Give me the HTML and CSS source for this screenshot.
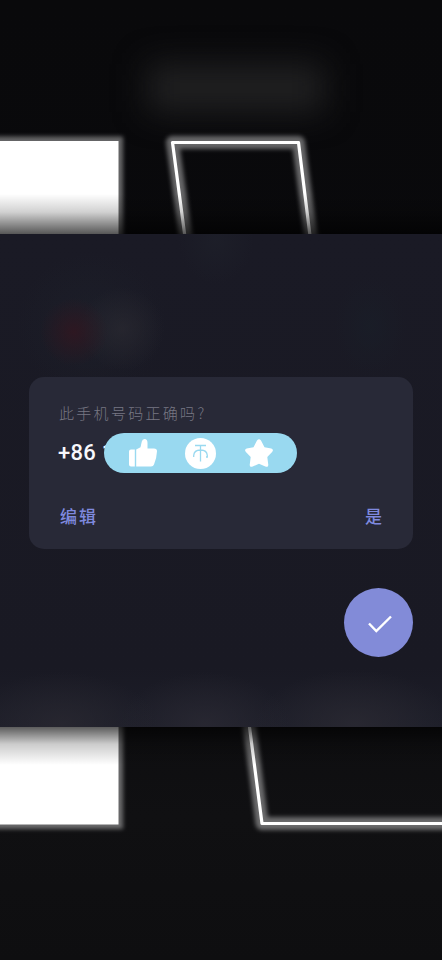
FILE: index.html
```html
<!DOCTYPE html>
<html lang="zh-CN">
<head>
<meta charset="utf-8">
<meta name="viewport" content="width=device-width, initial-scale=1">
<title>确认手机号码</title>
<link rel="stylesheet" href="styles.css">
</head>
<body>
<main class="screen">
  <svg class="wallpaper" viewBox="0 0 442 960" aria-hidden="true">
    <defs>
      <filter id="glow" filterUnits="userSpaceOnUse" x="-40" y="110" width="522" height="750"><feGaussianBlur stdDeviation="2.2"/></filter>
      <filter id="haze" color-interpolation-filters="sRGB" filterUnits="userSpaceOnUse" x="60" y="0" width="360" height="190"><feGaussianBlur stdDeviation="16"/></filter>
      <linearGradient id="top" x2="0" y2="1"><stop offset="0" stop-opacity="0"/><stop offset=".45" stop-opacity=".18"/><stop offset="1" stop-opacity=".66"/></linearGradient>
      <linearGradient id="bottom" x2="0" y2="1"><stop offset="0" stop-opacity=".64"/><stop offset=".45" stop-opacity=".2"/><stop offset="1" stop-opacity="0"/></linearGradient>
    </defs>
    <rect class="haze" x="148" y="64" width="176" height="48" filter="url(#haze)"/>
    <g class="halo" filter="url(#glow)">
      <path class="block" d="M-20 136.500H123V829H-20z"/>
      <path class="line" d="M189 260L172.500 142.500H298.500L314 260M246 700L262 823.500H470"/>
    </g>
    <path class="block" d="M-20 141H118.500V824.500H-20z"/>
    <path class="line" d="M188 260L172.500 142.500H298.500L313 260M246 700L262 823.500H470"/>
    <path fill="url(#top)" d="M0 194H442V234H0z"/>
    <path fill="url(#bottom)" d="M0 727H442V765H0z"/>
  </svg>
  <section class="sheet">
    <div class="card">
      <p class="question">此手机号码正确吗?</p>
      <div class="number">
        <span class="phone">+86 1</span>
        <div class="pill">
          <svg class="icon" viewBox="0 0 28 28" aria-hidden="true"><path d="M2 10.500h3.800v17H2q-2 0-2-2v-13q0-2 2-2zM7.200 10.500l4.300-2.300 1.300-5.700Q13.400 0 15.500 0q3 0 3 4v5.500H25q3 0 3 2.800-.3 7-3 13.200-.6 2-3 2H7.200z"/></svg>
          <svg class="coin" viewBox="0 0 31 31" aria-hidden="true"><circle cx="15.500" cy="15.500" r="15.500"/><path d="M10 7.500H21M15.500 7.500V23.500M8.700 19V17.500q.3-5.500 6.800-5.500t6.800 5.500V19h-1.300"/></svg>
          <svg class="icon" viewBox="0 0 28 28" aria-hidden="true"><path d="M12 1.500Q14-1 16 1.500l3.500 6.800 6.800 1.200q2.800 1 .8 3.400L22.300 18l1 8q-.1 2.700-3 1.500L14 24.700l-6.300 2.800q-2.900 1.200-3-1.500l1-8L.9 12.900q-2-2.400.8-3.400l6.800-1.200z"/></svg>
        </div>
      </div>
      <div class="actions"><button class="edit">编辑</button><button class="yes">是</button></div>
    </div>
    <button class="confirm" aria-label="确认">
      <svg class="check" viewBox="0 0 24 18" aria-hidden="true"><path d="M1 8.500L8.300 16L23 1.500"/></svg>
    </button>
  </section>
</main>
</body>
</html>
```
FILE: styles.css
```css
* { box-sizing: border-box; }
body { margin: 0; background: #0b0b0d; }
button { padding: 0; border: 0; background: none; color: inherit; font: inherit; }
.screen {
  position: relative;
  width: 442px;
  height: 960px;
  padding-top: 234px;
  overflow: hidden;
  background: linear-gradient(#09090b, #0a0a0d 60%, #101012 85%, #0e0e10);
}
.wallpaper { position: absolute; inset: 0; width: 442px; height: 960px; }
.haze { fill: #202021; }
.halo { opacity: .38; }
.halo .line { stroke-width: 13; }
.block { fill: #fff; }
.line { fill: none; stroke: #fff; stroke-width: 3.2; stroke-linejoin: round; }
.sheet {
  position: relative;
  display: flex;
  flex-direction: column;
  height: 493px;
  padding: 143px 29px 0;
  background:
    radial-gradient(circle 34px at 74px 98px, rgba(50, 22, 32, .8), transparent),
    radial-gradient(circle 42px at 122px 95px, rgba(43, 42, 50, .65), transparent),
    radial-gradient(ellipse 75px 72px at 92px 90px, rgba(29, 32, 42, .7), transparent),
    radial-gradient(ellipse 36px 50px at 370px 92px, rgba(25, 30, 40, .7), transparent),
    radial-gradient(ellipse 38px 44px at 216px 6px, rgba(30, 32, 42, .7), transparent),
    radial-gradient(ellipse 95px 52px at 62px 490px, rgba(41, 40, 49, .8), transparent),
    radial-gradient(ellipse 85px 52px at 205px 490px, rgba(42, 41, 51, .8), transparent),
    radial-gradient(ellipse 100px 54px at 355px 490px, rgba(43, 42, 51, .8), transparent),
    linear-gradient(#1a1a25, #191923 88%, #1d1e29);
}
.card {
  display: flex;
  flex-direction: column;
  width: 384px;
  height: 172px;
  padding: 24px 30px 20px;
  border-radius: 15px;
  background: #282937;
}
.question {
  height: 24px;
  margin: 0;
  color: #777783;
  font: 300 15px/24px "Noto Sans CJK SC", sans-serif;
  letter-spacing: 2.3px;
  white-space: nowrap;
}
.number { position: relative; display: flex; height: 55px; padding-top: 15px; }
.phone {
  margin-left: -1px;
  color: #f8f8fc;
  font: 500 22px/26px Roboto, sans-serif;
  letter-spacing: .25px;
  white-space: pre;
}
.pill {
  position: absolute;
  top: 8px;
  left: 45px;
  display: flex;
  align-items: center;
  justify-content: space-between;
  width: 193px;
  height: 40px;
  padding: 0 24px 0 25px;
  border-radius: 20px;
  background: #99d9f0;
}
.icon { width: 28px; height: 28px; fill: #fff; }
.coin { width: 31px; height: 31px; margin-right: 1px; fill: #fff; }
.coin path { fill: none; stroke: #99d9f0; stroke-width: 1.3; }
.actions {
  display: flex;
  justify-content: space-between;
  margin-top: 24px;
  color: #7f89df;
  font: 500 17px/24px "Noto Sans CJK SC", sans-serif;
}
.edit { padding-left: 1px; letter-spacing: 2px; }
.yes { padding-right: 1px; }
.confirm {
  display: grid;
  place-items: center;
  align-self: flex-end;
  width: 69px;
  height: 69px;
  margin-top: 39px;
  border-radius: 50%;
  background: #828bd8;
}
.check { width: 24px; height: 18px; margin: 3px 0 0 2px; fill: none; stroke: #fff; stroke-width: 2.4; }
```
